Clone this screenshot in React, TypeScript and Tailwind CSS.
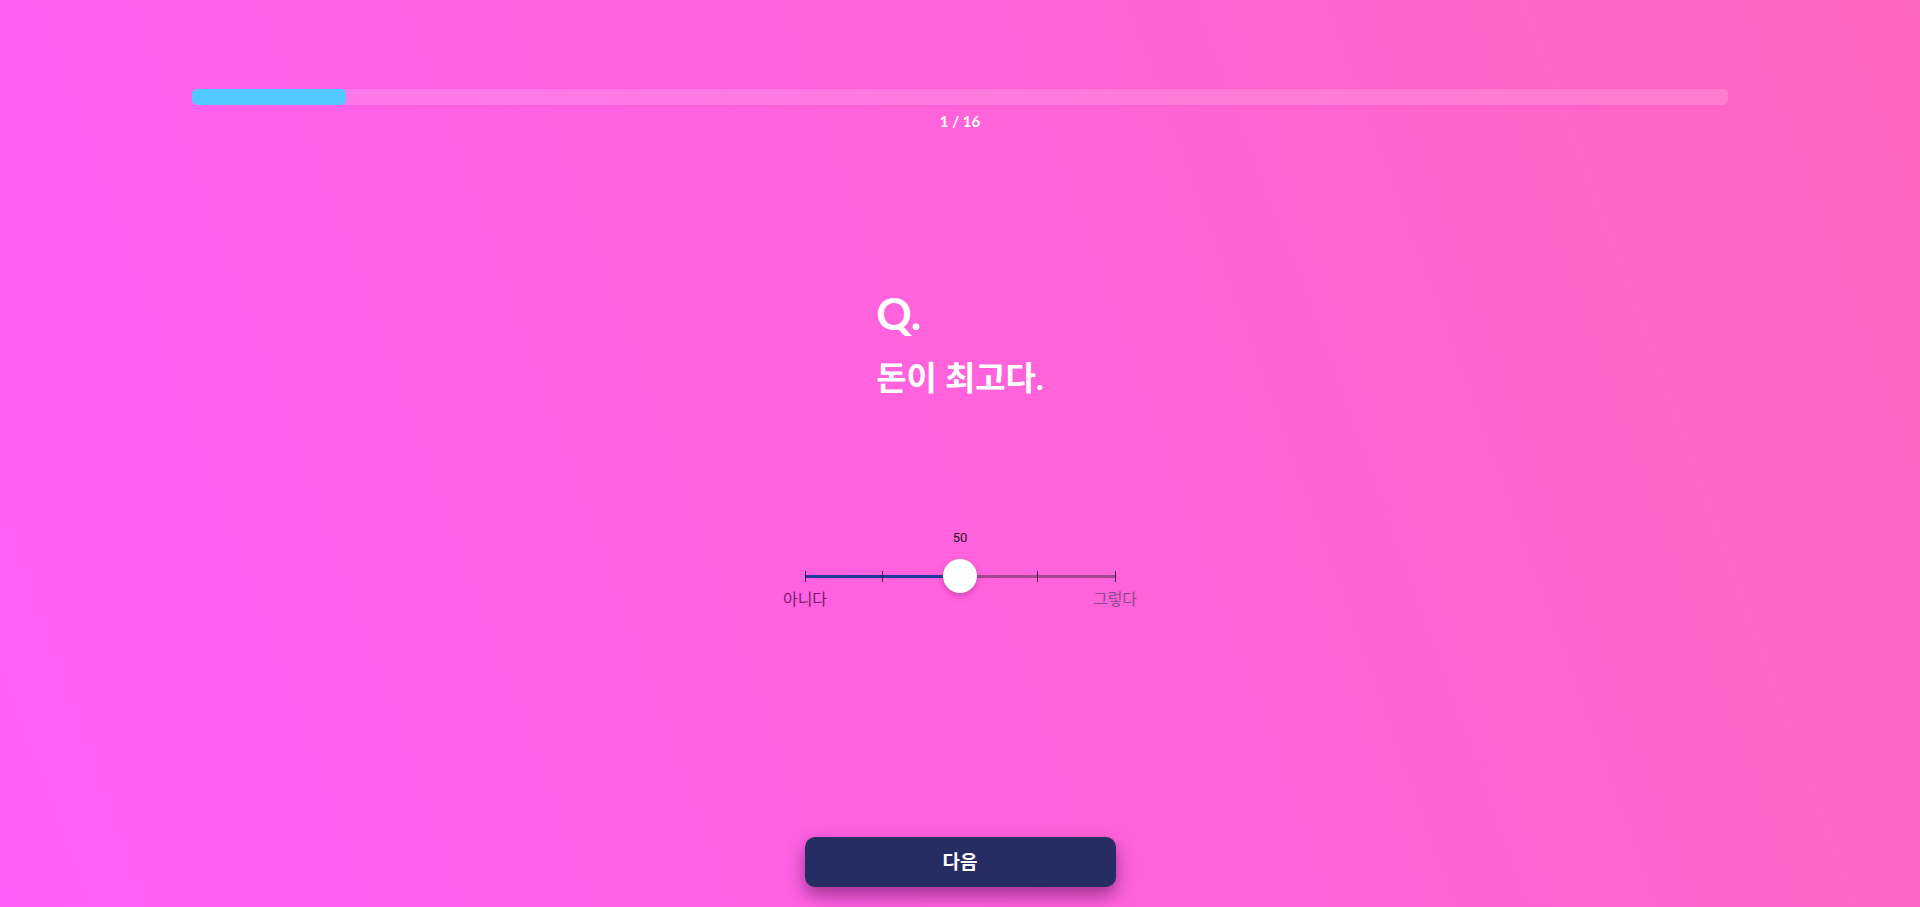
import React from "react";

const value = 50;
const ticks = [0, 25, 50, 75, 100];

export default function App() {
  return (
    <div className="h-[907px] w-full overflow-hidden bg-[linear-gradient(70deg,#ff5ff8,#ff66c0)] flex flex-col items-center text-white font-['Lato','Noto_Sans_CJK_KR',sans-serif]">
      {/* progress */}
      <div className="mt-[89px] w-[1536px] h-4 rounded-[5px] bg-white/15 overflow-hidden">
        <div className="h-full w-[10%] rounded-[5px] bg-[#52c8ff]" />
      </div>
      <div className="mt-[7px] text-[15px] leading-[18px] font-bold">1 / 16</div>

      {/* question */}
      <div className="mt-[161px] flex flex-col items-start">
        <div className="text-[44px] leading-[44px] font-bold">Q.</div>
        <div className="mt-[22px] text-[33px] leading-[40px] font-bold">돈이 최고다.</div>
      </div>

      {/* slider */}
      <div className="mt-[133px] text-[13px] leading-[16px] text-[#2a0a2a] font-['Roboto','Noto_Sans_CJK_KR',sans-serif]">
        {value}
      </div>
      <div className="mt-[13px] relative w-[310px] h-[34px]">
        <div className="absolute left-0 right-0 top-[16px] h-[3px] bg-[#a3458f]" />
        <div
          className="absolute left-0 top-[16px] h-[3px] bg-[#23399a]"
          style={{ width: `${value}%` }}
        />
        {ticks.map((t) => (
          <div
            key={t}
            className="absolute top-[12px] h-[11px] w-px bg-[#3a1a40]"
            style={{ left: `calc(${t}% - 0.5px)` }}
          />
        ))}
        <div
          className="absolute top-0 h-[34px] w-[34px] -translate-x-1/2 rounded-full bg-white shadow-[0_3px_6px_rgba(120,20,110,0.35)]"
          style={{ left: `${value}%` }}
        />
      </div>
      <div className="mt-[-5px] w-[310px] flex justify-between text-[16px] leading-[20px] font-['Noto_Sans_CJK_KR',sans-serif]">
        <div className="w-0 flex justify-center">
          <span className="whitespace-nowrap text-[#7a1a6a]">아니다</span>
        </div>
        <div className="w-0 flex justify-center">
          <span className="whitespace-nowrap text-[#8a4a90]">그렇다</span>
        </div>
      </div>

      {/* next button */}
      <button className="mt-[229px] w-[311px] h-[50px] rounded-[10px] bg-[#252d62] text-white text-[19px] font-bold shadow-[0_8px_18px_rgba(60,0,60,0.5)] font-['Lato','Noto_Sans_CJK_KR',sans-serif]">
        다음
      </button>
    </div>
  );
}
